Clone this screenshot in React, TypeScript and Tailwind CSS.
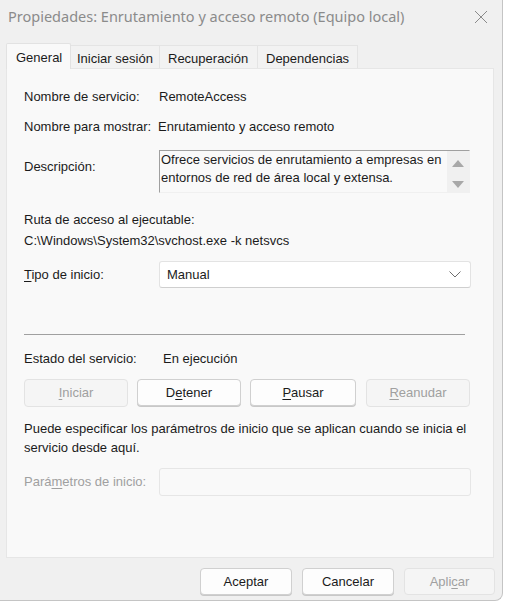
import React from "react";

const body = { fontFamily: '"Liberation Sans", Arial, sans-serif' };
const title = { fontFamily: '"Noto Sans", "Open Sans", sans-serif' };

function Btn({
  children,
  disabled,
  className = "",
}: {
  children: React.ReactNode;
  disabled?: boolean;
  className?: string;
}) {
  return (
    <div
      className={
        "flex items-center justify-center rounded-[4px] border text-[13px] " +
        (disabled
          ? "border-[#e3e3e3] bg-[#f5f5f5] text-[#a0a0a0] "
          : "border-[#d0d0d0] bg-[#fdfdfd] text-[#1b1b1b] shadow-[0_1px_0_#c8c8c8] ") +
        className
      }
    >
      {children}
    </div>
  );
}

export default function App() {
  return (
    <div className="w-[505px] h-[603px] bg-white" style={body}>
      <div className="w-[503px] h-[601px] bg-[#f0f0f0] border-r border-b border-[#c4c4c4] rounded-br-[8px] flex flex-col">
        {/* title bar */}
        <div className="h-[33px] flex items-center justify-between pl-2 pr-[10px]">
          <span className="text-[14.5px] text-[#8b8b8b]" style={title}>
            Propiedades: Enrutamiento y acceso remoto (Equipo local)
          </span>
          <svg width="14" height="14" viewBox="0 0 14 14" className="mr-[4px]">
            <path d="M1 1 L13 13 M13 1 L1 13" stroke="#8a8a8a" strokeWidth="1" />
          </svg>
        </div>

        {/* tabs */}
        <div className="mt-[10px] flex items-end pl-[6px] h-[25px] text-[13px] text-[#1b1b1b]">
          <div className="h-[26px] w-[65px] pl-[9px] pt-[4px] bg-[#f9f9f9] border border-b-0 border-[#e2e2e2] rounded-t-[2px] relative z-10 -mb-px">
            General
          </div>
          <div className="h-[23px] w-[89px] pt-[3px] pl-[6px] bg-[#f2f2f2] border-t border-r border-[#e4e4e4]">
            Iniciar sesión
          </div>
          <div className="h-[23px] w-[98px] pt-[3px] pl-[8px] bg-[#f2f2f2] border-t border-r border-[#e4e4e4]">
            Recuperación
          </div>
          <div className="h-[23px] w-[100px] pt-[3px] pl-[8px] bg-[#f2f2f2] border-t border-r border-[#e4e4e4]">
            Dependencias
          </div>
        </div>

        {/* panel */}
        <div className="mx-[6px] w-[488px] h-[490px] bg-[#f9f9f9] border border-[#e6e6e6] pl-[17px] pt-[20px] text-[13px] text-[#1b1b1b] leading-[16px] flex flex-col">
          <div className="flex h-4">
            <span className="w-[135px]">Nombre de servicio:</span>
            <span>RemoteAccess</span>
          </div>
          <div className="flex h-4 mt-[14px]">
            <span className="w-[134px]">Nombre para mostrar:</span>
            <span>Enrutamiento y acceso remoto</span>
          </div>
          <div className="flex mt-[15px]">
            <span className="w-[135px] pt-[9px]">Descripción:</span>
            <div className="w-[311px] h-[43px] border-t border-l border-[#a0a0a0] border-r border-b border-r-[#f0f0f0] border-b-[#f0f0f0] flex">
              <div className="flex-1 pl-[1px] pt-[0px] leading-[18px]">
                Ofrece servicios de enrutamiento a empresas en entornos de red de área local y extensa.
              </div>
              <div className="w-[22px] bg-[#f0f0f0] flex flex-col items-center justify-between pt-[9px] pb-[4px]">
                <svg width="12" height="7" viewBox="0 0 12 7">
                  <path d="M0 7 L6 0 L12 7 Z" fill="#a8a8a8" />
                </svg>
                <svg width="12" height="7" viewBox="0 0 12 7">
                  <path d="M0 0 L6 7 L12 0 Z" fill="#a8a8a8" />
                </svg>
              </div>
            </div>
          </div>
          <div className="mt-[19px] h-4">Ruta de acceso al ejecutable:</div>
          <div className="mt-[5px] h-4">C:\Windows\System32\svchost.exe -k netsvcs</div>
          <div className="flex items-center mt-[12px]">
            <span className="w-[135px]">
              <span className="underline underline-offset-2">T</span>ipo de inicio:
            </span>
            <div className="w-[312px] h-[27px] bg-white border border-[#e3e3e3] border-b-[#cfcfcf] rounded-[3px] flex items-center justify-between pl-[7px] pr-[9px]">
              <span>Manual</span>
              <svg width="12" height="7" viewBox="0 0 12 7">
                <path d="M0.5 0.5 L6 6 L11.5 0.5" fill="none" stroke="#6e6e6e" strokeWidth="1" />
              </svg>
            </div>
          </div>
          <div className="mt-[46px] w-[441px] h-px bg-[#a0a0a0]" />
          <div className="flex h-4 mt-[16px]">
            <span className="w-[139px]">Estado del servicio:</span>
            <span>En ejecución</span>
          </div>
          <div className="flex mt-[12px] gap-[9px]">
            <Btn disabled className="w-[104px] h-[28px]">
              <span>
                <span className="underline underline-offset-2">I</span>niciar
              </span>
            </Btn>
            <Btn className="w-[104px] h-[27px]">
              <span>
                D<span className="underline underline-offset-2">e</span>tener
              </span>
            </Btn>
            <Btn className="w-[106px] h-[27px]">
              <span>
                <span className="underline underline-offset-2">P</span>ausar
              </span>
            </Btn>
            <Btn disabled className="w-[104px] h-[28px] ml-[1px]">
              <span>
                <span className="underline underline-offset-2">R</span>eanudar
              </span>
            </Btn>
          </div>
          <div className="mt-[12px] w-[450px] leading-[19px]">
            Puede especificar los parámetros de inicio que se aplican cuando se inicia el servicio desde aquí.
          </div>
          <div className="flex items-center mt-[11px]">
            <span className="w-[135px] text-[#a0a0a0]">
              Pará<span className="underline underline-offset-2">m</span>etros de inicio:
            </span>
            <div className="w-[312px] h-[28px] bg-[#f9f9f9] border border-[#e6e6e6] rounded-[3px]" />
          </div>
        </div>

        {/* dialog buttons */}
        <div className="flex mt-[10px] pl-[200px] gap-[10px]">
          <Btn className="w-[92px] h-[27px]">Aceptar</Btn>
          <Btn className="w-[92px] h-[27px]">Cancelar</Btn>
          <Btn disabled className="w-[91px] h-[27px]">
            <span>
              Apli<span className="underline underline-offset-2">c</span>ar
            </span>
          </Btn>
        </div>
      </div>
    </div>
  );
}
